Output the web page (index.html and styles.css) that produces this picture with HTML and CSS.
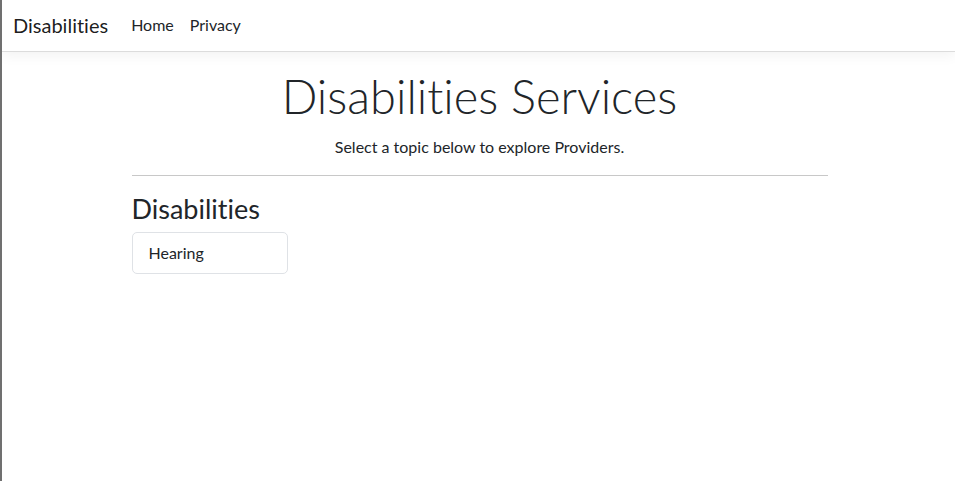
FILE: index.html
```html
<!DOCTYPE html>
<html lang="en">
<head>
<meta charset="utf-8">
<title>Disabilities</title>
<link rel="stylesheet" href="styles.css">
</head>
<body>
<header class="topbar">
  <nav class="navbar">
    <a class="brand" href="#">Disabilities</a>
    <ul class="nav-links">
      <li><a href="#">Home</a></li>
      <li><a href="#">Privacy</a></li>
    </ul>
  </nav>
</header>
<div class="container">
  <main class="main">
    <div class="hero">
      <h1 class="display">Disabilities Services</h1>
      <p class="lead">Select a topic below to explore Providers.</p>
    </div>
    <hr class="divider">
    <h3 class="section-title">Disabilities</h3>
    <div class="topics">
      <a class="topic-card" href="#">Hearing</a>
    </div>
  </main>
</div>
</body>
</html>
```
FILE: styles.css
```css
* { box-sizing: border-box; }
html, body { height: 100%; }
body {
  margin: 0;
  font-family: "Segoe UI", "Lato", "Liberation Sans", sans-serif;
  font-variant-ligatures: none;
  font-size: 16px;
  line-height: 1.5;
  color: #212529;
  background: #fff;
  border-left: 2px solid #707070;
}
a { text-decoration: none; color: inherit; }
.topbar {
  border-bottom: 1px solid #dcdcdc;
  box-shadow: 0 4px 12px rgba(0,0,0,0.05);
  margin-bottom: 16px;
}
.navbar {
  display: flex;
  align-items: center;
  height: 51px;
  padding: 0 11px 2px;
}
.brand {
  font-size: 20px;
  color: rgba(0,0,0,0.9);
  margin-right: 15px;
}
.nav-links {
  display: flex;
  list-style: none;
  margin: 0;
  padding: 0;
}
.nav-links a {
  display: block;
  padding: 8px 8px;
  color: #212529;
}
.container {
  width: 720px;
  margin: 0 auto;
  padding: 0 12px;
  position: relative;
  left: 1px;
}
.hero { text-align: center; }
.display {
  font-size: 47px;
  font-weight: 300;
  line-height: 1.2;
  margin: 0 0 11px;
}
.lead {
  margin: 0;
  font-size: 16px;
}
.divider {
  margin: 16px 0 17px;
  border: 0;
  border-top: 1px solid #c8c8c8;
}
.section-title {
  font-size: 27px;
  font-weight: 400;
  line-height: 1.2;
  margin: 0 0 6px;
}
.topics { display: flex; }
.topic-card {
  display: block;
  width: 156px;
  padding: 8px 16px;
  border: 1px solid #dfe2e6;
  border-radius: 5px;
}
```
